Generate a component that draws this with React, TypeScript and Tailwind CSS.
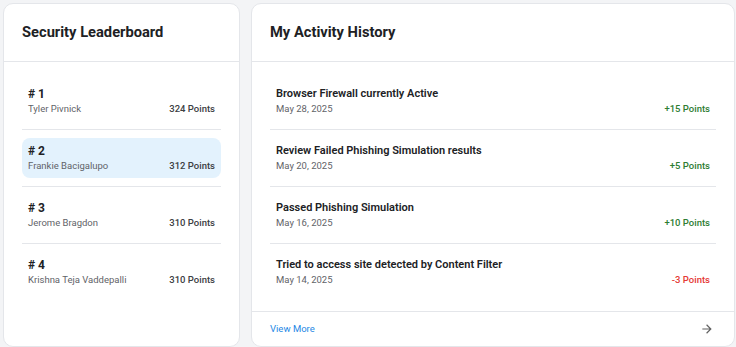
import { MdArrowForward } from 'react-icons/md'

const leaders = [
  { rank: 1, name: 'Tyler Pivnick', points: 324 },
  { rank: 2, name: 'Frankie Bacigalupo', points: 312, me: true },
  { rank: 3, name: 'Jerome Bragdon', points: 310 },
  { rank: 4, name: 'Krishna Teja Vaddepalli', points: 310 },
]

const activity = [
  { title: 'Browser Firewall currently Active', date: 'May 28, 2025', points: 15 },
  { title: 'Review Failed Phishing Simulation results', date: 'May 20, 2025', points: 5 },
  { title: 'Passed Phishing Simulation', date: 'May 16, 2025', points: 10 },
  { title: 'Tried to access site detected by Content Filter', date: 'May 14, 2025', points: -3 },
]

function CardHeader({ title }: { title: string }) {
  return (
    <div className="h-[58px] flex items-center px-[18px] pb-[2px] border-b border-[#e4e6ea]">
      <h2 className="text-[14.7px] leading-5 font-bold text-[#202124]">{title}</h2>
    </div>
  )
}

export default function App() {
  return (
    <div
      className="w-[736px] h-[347px] bg-[#f3f4f6] pt-[3px] pl-[3px] pr-[1px] flex gap-[11px] overflow-hidden"
      style={{ fontFamily: 'Roboto, "Liberation Sans", sans-serif' }}
    >
      {/* Leaderboard */}
      <div className="w-[237px] h-[344px] bg-white border border-[#e4e6ea] rounded-[10px] flex flex-col">
        <CardHeader title="Security Leaderboard" />
        <div className="px-[18px] pt-[11px]">
          {leaders.map((l, i) => (
            <div key={l.rank} className={`py-2 ${i > 0 ? 'border-t border-[#e4e6ea]' : ''}`}>
              <div className={`rounded-lg px-1.5 pt-1.5 pb-[5px] ${l.me ? 'bg-[#e3f2fd]' : ''}`}>
                <div className="text-[12px] leading-[14px] font-bold text-[#202124]"># {l.rank}</div>
                <div className="flex justify-between items-center text-[9.5px] leading-[15px]">
                  <span className="text-[#5f6368]">{l.name}</span>
                  <span className="font-medium text-[#3c4043]">{l.points} Points</span>
                </div>
              </div>
            </div>
          ))}
        </div>
      </div>

      {/* Activity */}
      <div className="flex-1 h-[344px] bg-white border border-[#e4e6ea] rounded-[10px] flex flex-col">
        <CardHeader title="My Activity History" />
        <div className="px-[18px] pt-[11px] pb-[11px] border-b border-[#e4e6ea]">
          {activity.map((a, i) => (
            <div key={a.title} className={`py-2 ${i > 0 ? 'border-t border-[#e4e6ea]' : ''}`}>
              <div className="px-1.5 pt-1.5 pb-[5px]">
                <div className="text-[11px] leading-[14px] font-semibold text-[#202124]">{a.title}</div>
                <div className="flex justify-between items-center text-[9.5px] leading-[15px]">
                  <span className="text-[#5f6368]">{a.date}</span>
                  <span className={`font-medium ${a.points > 0 ? 'text-[#2e7d32]' : 'text-[#e53935]'}`}>
                    {a.points > 0 ? '+' : ''}
                    {a.points} Points
                  </span>
                </div>
              </div>
            </div>
          ))}
        </div>
        <div className="flex-1 flex items-center justify-between px-[18px]">
          <a href="#" className="text-[9.5px] text-[#1e88e5]">
            View More
          </a>
          <MdArrowForward className="text-[#616161] mr-0.5" size={14} />
        </div>
      </div>
    </div>
  )
}
